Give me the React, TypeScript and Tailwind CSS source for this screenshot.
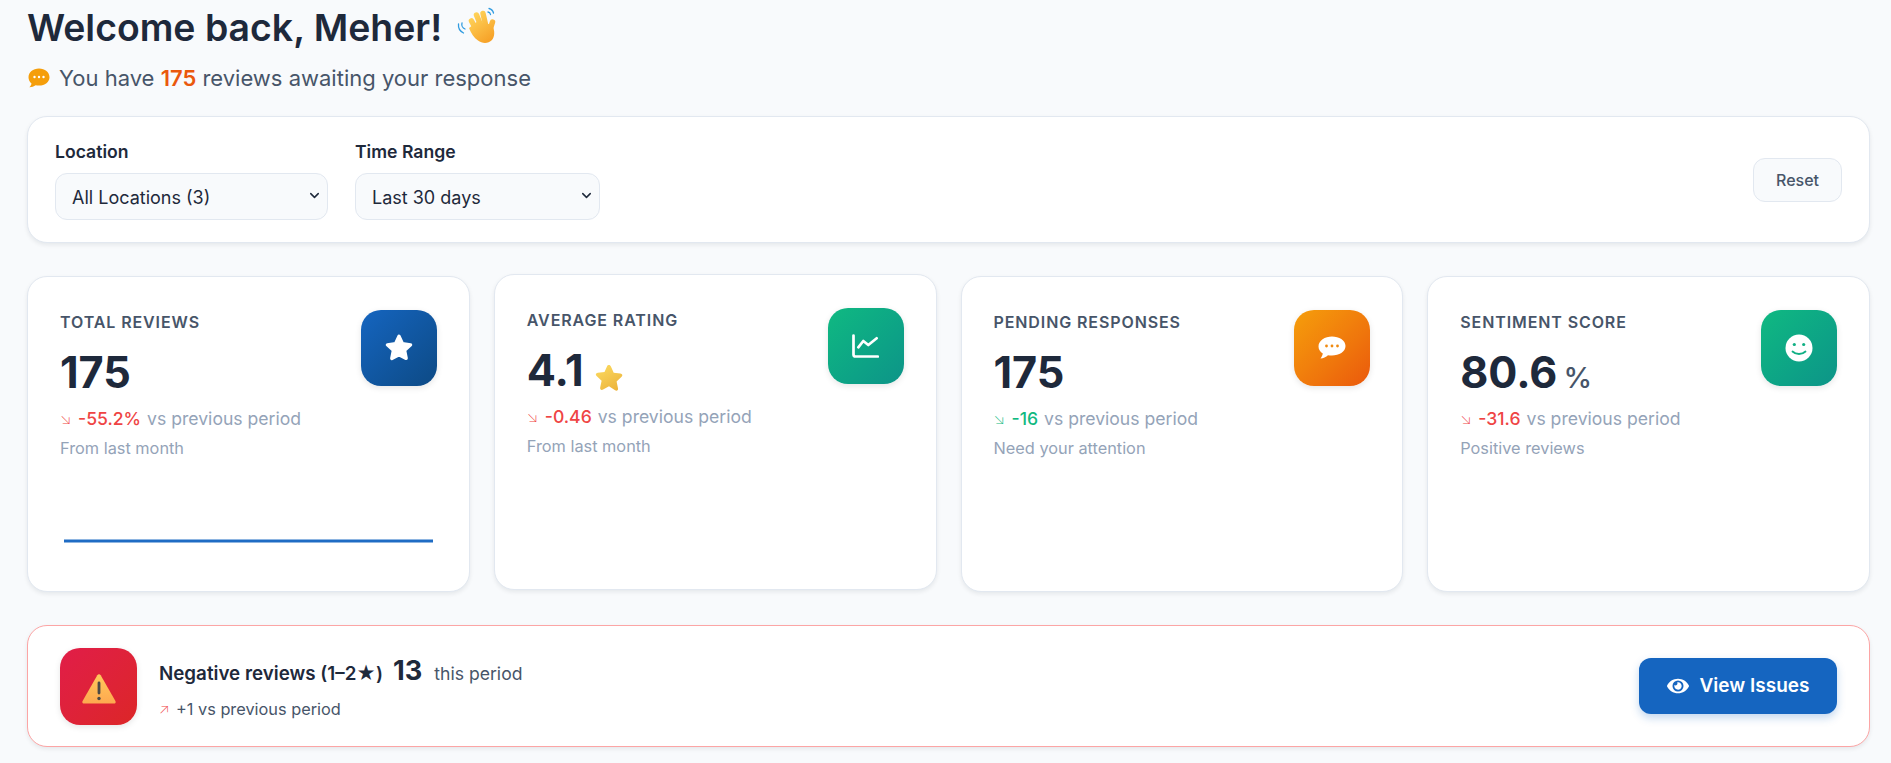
import React from "react";
import { ChevronDown } from "lucide-react";
import { FaEye } from "react-icons/fa";

const F = "font-['Inter','Liberation_Sans',sans-serif]";

function Wave() {
  return (
    <svg viewBox="0 0 42 42" className="w-[42px] h-[42px]">
      <defs>
        <linearGradient id="hand" gradientUnits="userSpaceOnUse" x1="14" y1="6" x2="38" y2="38">
          <stop offset="0" stopColor="#ffd75e" />
          <stop offset="1" stopColor="#f5981e" />
        </linearGradient>
      </defs>
      <path d="M33 1.500a6 6 0 0 1 4.500 4.500M32 5a3 3 0 0 1 2.500 2.500" stroke="#2f9be0" strokeWidth="1.300" fill="none" strokeLinecap="round" />
      <path d="M2.500 17a9 9 0 0 0 5 9M6 16a5 5 0 0 0 3 6" stroke="#2f9be0" strokeWidth="1.300" fill="none" strokeLinecap="round" />
      <g stroke="url(#hand)" strokeWidth="5.500" strokeLinecap="round" fill="none">
        <path d="M23 28 L15.500 14" />
        <path d="M27 24 L20.500 8" />
        <path d="M31 24 L27 6.500" />
        <path d="M33 26 L36.500 15" />
      </g>
      <path d="M13 21 L22 14 L36 18 C39.500 24 38.500 30 36 33 C32 37 26 36.500 22 33.500 C18 31 15 26 13 21 Z" fill="url(#hand)" />
    </svg>
  );
}

function Bubble() {
  return (
    <svg viewBox="0 0 24 24" className="w-[24px] h-[24px]">
      <path d="M12 2.500C6 2.500 1.500 6.300 1.500 11.200c0 2.500 1.200 4.600 3 6.200-.2 1.400-1 2.700-2.200 3.800 2.400 0 4.600-.8 6.300-2 1.100.3 2.200.4 3.400.4 6 0 10.500-3.600 10.500-8.400S18 2.500 12 2.500z" fill="#f59e0b" />
      <circle cx="7.500" cy="11" r="1.200" fill="#fff" />
      <circle cx="12" cy="11" r="1.200" fill="#fff" />
      <circle cx="16.500" cy="11" r="1.200" fill="#fff" />
    </svg>
  );
}

function Star3D() {
  return (
    <svg viewBox="0 0 30 30" className="w-[30px] h-[30px]">
      <defs>
        <linearGradient id="st" x1="0.2" y1="0" x2="0.8" y2="1">
          <stop offset="0" stopColor="#fbd95f" />
          <stop offset="1" stopColor="#ecb33b" />
        </linearGradient>
      </defs>
      <path d="M15 2c.9 0 1.500.6 1.900 1.500l2.800 6.200 6.700.8c2 .3 2.600 2 1.200 3.300l-5 4.700 1.400 6.700c.4 2-1.100 3.100-2.900 2.100L15 23.200l-5.900 3.300c-1.800 1-3.300-.1-2.900-2.100l1.400-6.700-5-4.700c-1.400-1.300-.8-3 1.200-3.300l6.700-.8 2.800-6.200C13.500 2.600 14.100 2 15 2z" fill="url(#st)" />
    </svg>
  );
}

function SolidStar() {
  return (
    <svg viewBox="0 0 24 24" className="w-[32px] h-[32px]" fill="#fff" stroke="#fff" strokeWidth="2.500" strokeLinejoin="round">
      <path d="M12 3.200l2.600 5.600 6.100.8-4.500 4.200 1.200 6L12 17l-5.400 2.800 1.200-6-4.500-4.200 6.100-.8z" />
    </svg>
  );
}

function LineChart() {
  return (
    <svg viewBox="0 0 27 24" className="w-[27px] h-[24px]" fill="none" stroke="#fff" strokeWidth="2.700" strokeLinecap="round" strokeLinejoin="round">
      <path d="M1.500 1.500v19a2 2 0 0 0 2 2H25.800" />
      <path d="M6.300 13.300 11.300 7l5 4 8.400-6.700" />
    </svg>
  );
}

function Chat() {
  return (
    <svg viewBox="0 0 30 30" className="w-[30px] h-[30px]">
      <path d="M15 3.500C8 3.500 1.500 7.500 1.500 13.500c0 3 1.800 5.400 4.300 7-.3 1.700-1 3.200-2.300 5 2.800-.2 5.500-1.500 7.500-3.300 1.200.2 2.400.3 4 .3 7 0 13.500-3.800 13.500-9.500S22 3.500 15 3.500z" fill="#fff" />
      <circle cx="9.500" cy="13" r="1.400" fill="#f08a10" />
      <circle cx="15" cy="13" r="1.400" fill="#f08a10" />
      <circle cx="20.500" cy="13" r="1.400" fill="#f08a10" />
    </svg>
  );
}

function Smile() {
  return (
    <svg viewBox="0 0 30 30" className="w-[30px] h-[30px]">
      <circle cx="15" cy="15" r="13.500" fill="#fff" />
      <circle cx="10.300" cy="11.500" r="1.600" fill="#10b084" />
      <circle cx="19.700" cy="11.500" r="1.600" fill="#10b084" />
      <path d="M8.500 18.500c3.500 3.300 9.500 3.300 13 0" stroke="#10b084" strokeWidth="1.800" fill="none" strokeLinecap="round" />
    </svg>
  );
}

function Warn() {
  return (
    <svg viewBox="0 0 34 30" className="w-[34px] h-[30px]">
      <defs>
        <linearGradient id="wg" x1="0" y1="0" x2="0" y2="1">
          <stop offset="0" stopColor="#ffc95c" />
          <stop offset="1" stopColor="#fea84f" />
        </linearGradient>
      </defs>
      <path d="M15.300 1.200c.8-1.200 2.600-1.200 3.400 0L33.400 27c.7 1.300-.1 2.600-1.500 2.600H2.100c-1.400 0-2.200-1.300-1.500-2.600z" fill="url(#wg)" />
      <rect x="15.600" y="7.500" width="2.800" height="13" rx="1.400" fill="#4d4a45" />
      <circle cx="17" cy="24.500" r="1.700" fill="#4d4a45" />
    </svg>
  );
}

function Card({
  label, value, suffix, arrow, delta, deltaClass, sub, icon, iconClass, lifted, spark,
}: {
  label: string; value: string; suffix?: React.ReactNode; arrow: string; delta: string; deltaClass: string;
  sub: string; icon: React.ReactNode; iconClass: string; lifted?: boolean; spark?: boolean;
}) {
  return (
    <div className={`bg-white border border-[#e2e8f0] rounded-[20px] px-8 pt-[33px] h-[316px] shadow-[0_2px_4px_rgba(15,23,42,0.08)] ${lifted ? "-translate-y-0.5" : ""}`}>
      <div className="flex justify-between items-start">
        <div>
          <div className="text-[16px] leading-[22px] mt-[1px] font-semibold uppercase tracking-[0.9px] text-[#475569]">{label}</div>
          <div className="flex items-end gap-[6px] mt-[12px] h-[54px]">
            <span className="text-[43.2px] leading-[54px] font-bold text-[#1e293b]">{value}</span>
            {suffix}
          </div>
          <div className="mt-[8px] text-[17.6px] leading-[24px] text-[#94a3b8] flex items-center">
            <span className={`text-[15px] font-extralight w-[18px] ${deltaClass}`}>{arrow}</span>
            <span className={`mr-[6px] font-medium ${deltaClass}`}>{delta}</span>
            <span>vs previous period</span>
          </div>
          <div className="mt-[6px] text-[16.32px] leading-[22px] text-[#94a3b8]">{sub}</div>
        </div>
        <div className={`w-[76px] h-[76px] rounded-[20px] flex items-center justify-center shadow-[0_2px_6px_rgba(0,0,0,0.1)] ${iconClass}`}>{icon}</div>
      </div>
      {spark && (
        <svg viewBox="0 0 369 4" className="w-[369px] h-1 mt-[80px] ml-[4px] block">
          <line x1="0" y1="2" x2="369" y2="2" stroke="#1f6cc4" strokeWidth="3" />
        </svg>
      )}
    </div>
  );
}

function Field({ label, value, width }: { label: string; value: string; width: string }) {
  return (
    <label className="flex flex-col gap-[9px]">
      <span className="text-[17.6px] leading-[24px] font-semibold text-[#1e293b]">{label}</span>
      <span className="relative block">
        <select defaultValue={value} className={`appearance-none h-[47px] rounded-[12px] border border-[#e2e8f0] bg-[#f8fafc] px-4 pt-[2px] text-[18px] text-[#1e293b] block ${width}`}>
          <option value={value}>{value}</option>
        </select>
        <ChevronDown className="absolute right-[6px] top-[15px] w-[15px] h-[15px] text-[#1e293b] pointer-events-none" strokeWidth={2.4} />
      </span>
    </label>
  );
}

export default function App() {
  return (
    <div className={`${F} bg-[#f8fafc] h-[763px] overflow-hidden pl-[27px] pr-[21px]`}>
      <h1 className="text-[37.4px] leading-[48px] font-semibold text-[#1e293b] flex items-center gap-[14px] pt-[4px]">
        Welcome back, Meher! <Wave />
      </h1>
      <p className="text-[22px] leading-[32px] text-[#475569] flex items-center gap-[8px] mt-[10px]">
        <Bubble />
        <span>You have <span className="font-semibold text-[#ea580c]">175</span> reviews awaiting your response</span>
      </p>
      <div className="mt-[22px] h-[127px] bg-white border border-[#e2e8f0] rounded-[20px] px-[27px] shadow-[0_2px_4px_rgba(15,23,42,0.08)] flex items-center justify-between">
        <div className="flex gap-[27px] mt-[1px]">
          <Field label="Location" value="All Locations (3)" width="w-[273px]" />
          <Field label="Time Range" value="Last 30 days" width="w-[245px]" />
        </div>
        <button className="w-[89px] h-[44px] rounded-[12px] border border-[#e2e8f0] bg-[#f8fafc] text-[16px] font-medium text-[#475569]">Reset</button>
      </div>
      <div className="grid grid-cols-4 gap-6 mt-[33px]">
        <Card label="Total Reviews" value="175" arrow="↘" delta="-55.2%" deltaClass="text-[#ef4444]" sub="From last month"
          icon={<SolidStar />} iconClass="bg-gradient-to-br from-[#1565c0] to-[#0d4a85]" spark />
        <Card label="Average Rating" value="4.1" suffix={<span className="mb-[4px] ml-[4px]"><Star3D /></span>} arrow="↘" delta="-0.46" deltaClass="text-[#ef4444]" sub="From last month"
          icon={<LineChart />} iconClass="bg-gradient-to-br from-[#10b981] to-[#0d9488]" lifted />
        <Card label="Pending Responses" value="175" arrow="↘" delta="-16" deltaClass="text-[#10b981]" sub="Need your attention"
          icon={<Chat />} iconClass="bg-gradient-to-br from-[#f59e0b] to-[#ea580c]" />
        <Card label="Sentiment Score" value="80.6" suffix={<span className="text-[28.8px] leading-[42px] font-medium text-[#475569]">%</span>} arrow="↘" delta="-31.6" deltaClass="text-[#ef4444]" sub="Positive reviews"
          icon={<Smile />} iconClass="bg-gradient-to-br from-[#10b981] to-[#0d9488]" />
      </div>
      <div className="mt-[33px] h-[122px] bg-white border border-[#fca5a5] rounded-[20px] px-8 shadow-[0_2px_4px_rgba(15,23,42,0.08)] flex items-center justify-between">
        <div className="flex items-center gap-[22px]">
          <div className="w-[77px] h-[77px] rounded-[20px] flex items-center justify-center pt-[5px] bg-gradient-to-br from-[#e11d48] to-[#dc2626] shadow-[0_2px_6px_rgba(0,0,0,0.1)]"><Warn /></div>
          <div>
            <div className="flex items-baseline">
              <span className="text-[18.8px] font-semibold text-[#1e293b]">Negative reviews (1–2★)</span>
              <span className="text-[27.2px] font-bold text-[#1e293b] ml-[10px]">13</span>
              <span className="text-[17.6px] text-[#475569] ml-[12px]">this period</span>
            </div>
            <div className="text-[16.32px] text-[#475569] mt-[5px] flex items-center">
              <span className="text-[14px] font-extralight text-[#ef4444] w-[17px]">↗</span>+1 vs previous period
            </div>
          </div>
        </div>
        <button className="w-[198px] h-[56px] rounded-[12px] bg-[#1565c0] text-white text-[19px] font-semibold flex items-center justify-center gap-[11px] shadow-[0_4px_8px_rgba(21,101,192,0.25)]">
          <FaEye className="w-[22px] h-[22px]" />View Issues
        </button>
      </div>
    </div>
  );
}
